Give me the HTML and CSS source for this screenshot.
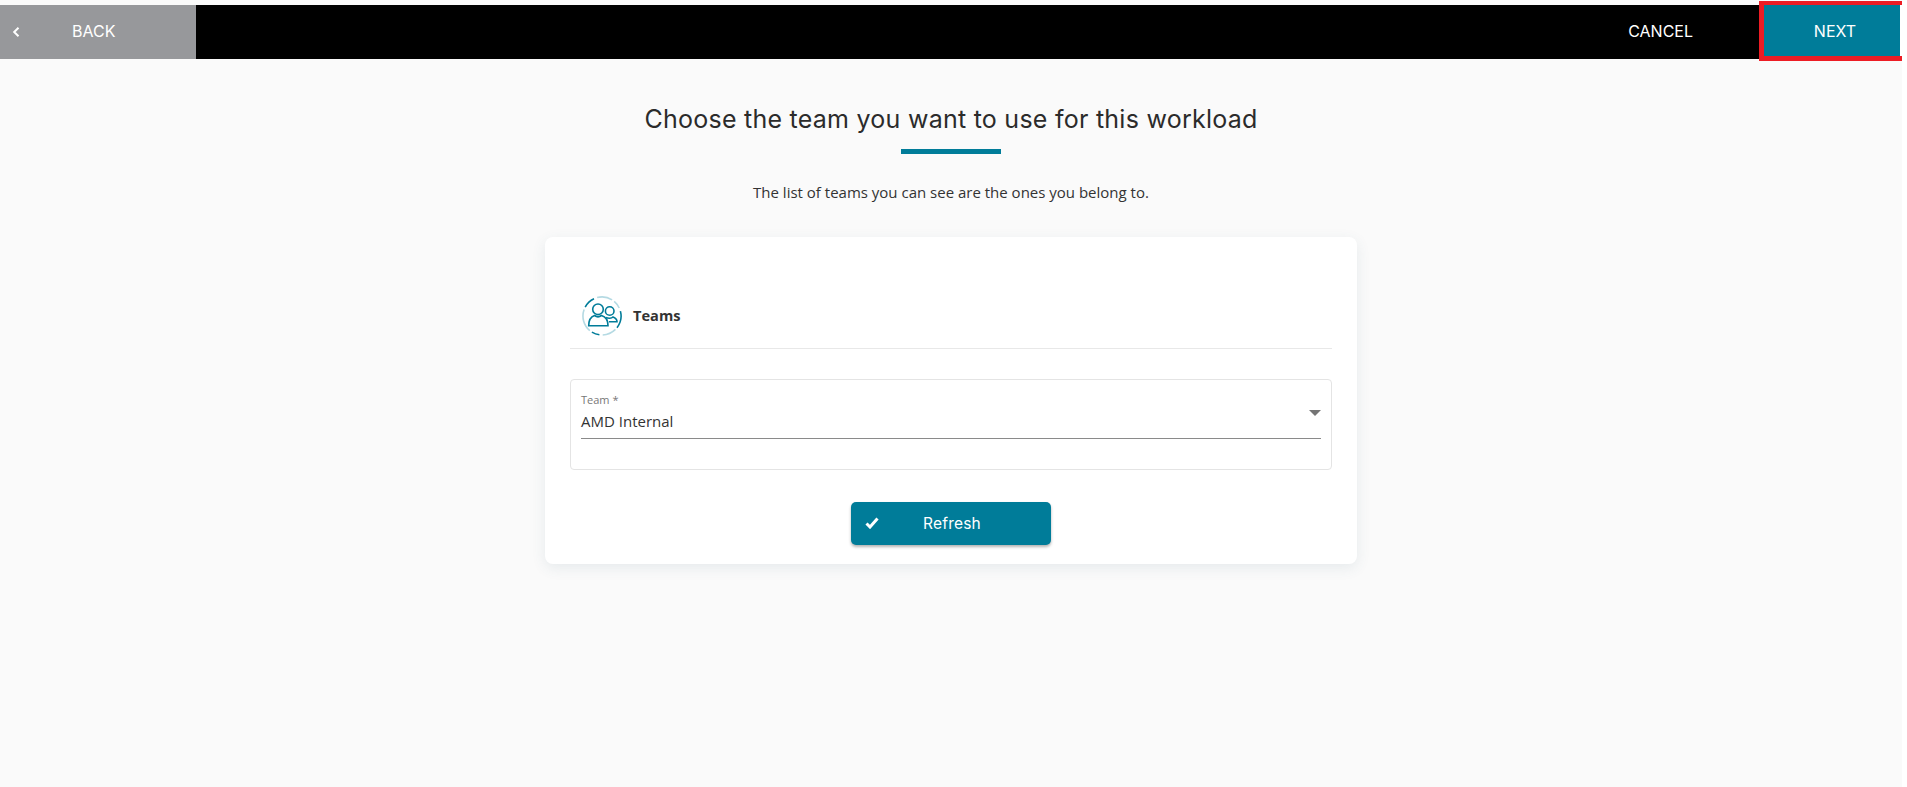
FILE: index.html
```html
<!DOCTYPE html>
<html lang="en">
<head>
    <meta charset="UTF-8">
    <meta name="viewport" content="width=device-width, initial-scale=1.0">
    <title>Choose team</title>
    <link rel="stylesheet" href="styles.css">
</head>
<body>
    <div class="wizard-nav">
        <a class="back-btn">
            <svg class="back-icon" width="8" height="10" viewBox="0 0 8 10"><path d="M6.5 .8 L2.2 5 L6.5 9.2" fill="none" stroke="#fff" stroke-width="2"/></svg>
            <span class="back-label">BACK</span>
        </a>
        <div class="nav-right">
            <a class="cancel-btn">CANCEL</a>
            <a class="next-btn">NEXT</a>
        </div>
    </div>

    <div class="content">
        <h2 class="title">Choose the team you want to use for this workload</h2>
        <div class="title-bar"></div>
        <p class="subtitle">The list of teams you can see are the ones you belong to.</p>

        <div class="card">
            <div class="card-header">
                <svg class="team-icon" width="40" height="40" viewBox="0 0 40 40" fill="none" stroke="#007c99" stroke-width="1.6">
                    <path class="ring-light" d="M15.1 1.6 A19 19 0 0 1 30.1 3.9 M32.2 5.4 A19 19 0 0 1 37.2 12 M33.4 33.4 A19 19 0 0 1 20.7 39 M7.8 34.6 A19 19 0 0 1 2.1 13.5"/>
                    <path d="M3.2 11.1 A19 19 0 0 1 12 2.8 M38.4 15.1 A19 19 0 0 1 35 31.7 M17.4 38.8 A19 19 0 0 1 9.9 36.1"/>
                    <circle cx="16" cy="13.3" r="5.3"/>
                    <path d="M6.7 29.7 H26 C26 24 23 20.5 19.5 19.5 C17.5 21 14.5 21 12.5 19.5 C9.5 20.5 6.7 24 6.7 29.7 Z"/>
                    <circle cx="27.7" cy="15" r="4.3"/>
                    <path d="M24 21.5 C26 22.5 29.5 22.5 31 21 C33.5 22 35 23.5 35 25.7 H27"/>
                </svg>
                <span class="card-title">Teams</span>
            </div>

            <div class="field">
                <div class="select-box">
                    <label class="select-label">Team *</label>
                    <div class="select-value">AMD Internal</div>
                    <span class="select-arrow"></span>
                </div>
            </div>

            <div class="card-actions">
                <button class="refresh-btn">
                    <svg class="check-icon" width="14" height="12" viewBox="0 0 14 12"><path d="M1.5 6.5 L5 10 L12.5 1.5" fill="none" stroke="#fff" stroke-width="3"/></svg>
                    Refresh
                </button>
            </div>
        </div>
    </div>
</body>
</html>
```

FILE: styles.css
```css
body {
    margin: 0;
    padding-top: 5px;
    background: #fafafa;
    font-family: "Open Sans", sans-serif;
    color: #333;
    height: 782px;
    overflow: hidden;
    border-right: 5px solid #fff;
}
.wizard-nav {
    display: flex;
    justify-content: space-between;
    height: 54px;
    background: #000;
    font-family: Inter, sans-serif;
    font-size: 16px;
    color: #fff;
}
.back-btn {
    width: 196px;
    padding-bottom: 2px;
    box-sizing: border-box;
    display: flex;
    align-items: center;
    background: #97989b;
}
.back-icon {
    margin-left: 12px;
    margin-top: 2px;
}
.back-label {
    margin-left: 52px;
}
.nav-right {
    display: flex;
    align-items: center;
    margin-right: -4px;
}
.cancel-btn {
    margin-right: 66px;
    padding-bottom: 2px;
}
.next-btn {
    align-self: flex-start;
    width: 147px;
    height: 60px;
    margin-top: -4px;
    padding-left: 4px;
    box-sizing: border-box;
    display: flex;
    align-items: center;
    justify-content: center;
    background: #007c99;
    border: solid #ed1c24;
    border-width: 4px 4px 5px 5px;
    box-shadow: inset -2px 0 0 #fff;
}
.content {
    display: flex;
    flex-direction: column;
    align-items: center;
}
.title {
    margin: 42px 0 0;
    font-family: Inter, sans-serif;
    font-size: 25px;
    font-weight: 400;
    letter-spacing: 0.25px;
    line-height: 36px;
    color: #2b2b2b;
}
.title-bar {
    width: 100px;
    height: 5px;
    margin-top: 12px;
    background: #007c99;
}
.subtitle {
    margin: 28px 0 0;
    font-size: 15px;
    line-height: 20px;
}
.card {
    width: 812px;
    height: 327px;
    margin-top: 35px;
    padding: 0 25px;
    box-sizing: border-box;
    background: #fff;
    border-radius: 8px;
    box-shadow: 0 4px 14px rgba(60, 100, 120, 0.1);
}
.card-header {
    display: flex;
    align-items: center;
    gap: 11px;
    height: 112px;
    padding: 47px 0 0 12px;
    box-sizing: border-box;
    border-bottom: 1px solid #e8e8e8;
}
.ring-light {
    stroke: #b5dae3;
}
.card-title {
    padding-bottom: 2px;
    font-size: 14.6px;
    font-weight: 700;
}
.field {
    margin-top: 30px;
}
.select-box {
    position: relative;
    height: 91px;
    padding: 12px 10px 0;
    box-sizing: border-box;
    border: 1px solid #e4e4e4;
    border-radius: 4px;
}
.select-label {
    display: block;
    font-size: 11px;
    line-height: 15px;
    color: #777;
}
.select-value {
    height: 31px;
    font-size: 15px;
    line-height: 29px;
    border-bottom: 1px solid #8a8a8a;
}
.select-arrow {
    position: absolute;
    top: 30px;
    right: 10px;
    border-left: 6.5px solid transparent;
    border-right: 6.5px solid transparent;
    border-top: 6.5px solid #757575;
}
.card-actions {
    display: flex;
    justify-content: center;
    margin-top: 32px;
}
.refresh-btn {
    position: relative;
    width: 200px;
    height: 43px;
    padding-left: 8px;
    border: 0;
    border-radius: 5px;
    background: #007c99;
    color: #fff;
    font-family: Inter, sans-serif;
    font-size: 15.5px;
    letter-spacing: 0.2px;
    box-shadow: 0 2px 3px rgba(0, 0, 0, 0.3);
}
.check-icon {
    position: absolute;
    left: 14px;
    top: 15px;
}
```
